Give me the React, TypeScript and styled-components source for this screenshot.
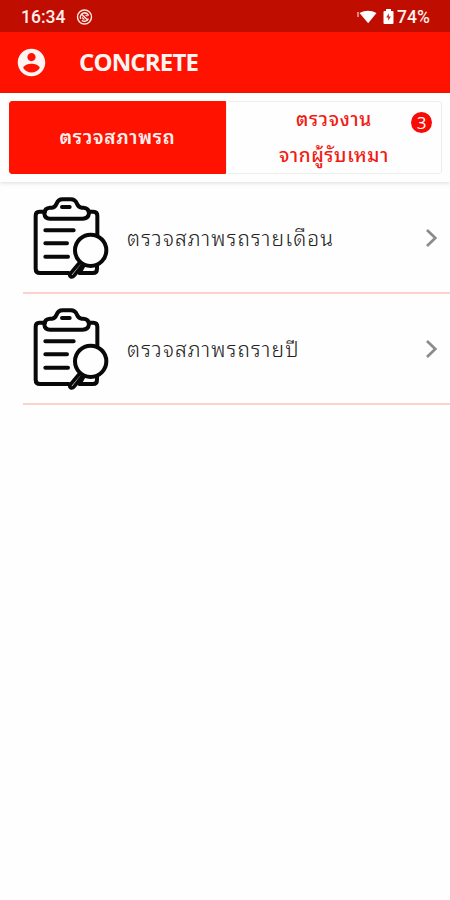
import React from "react";
import styled, { createGlobalStyle } from "styled-components";

const GlobalStyle = createGlobalStyle`
  * { box-sizing: border-box; }
  body { margin: 0; background: #fff; }
`;

const thai = `"Noto Sans Thai Looped", "Liberation Sans", sans-serif`;

const Screen = styled.main`
  width: 450px;
  height: 900px;
  overflow: hidden;
  background: #fefefe;
  font-family: ${thai};
`;

const StatusBar = styled.div`
  height: 32px;
  padding: 2px 20px 0 21px;
  display: flex;
  align-items: center;
  background: #bf0d00;
  color: #fff0ed;
  font: 500 17.5px/30px Roboto, sans-serif;
`;

const Clock = styled.span`
  width: 55px;
`;

const StatusRight = styled.div`
  margin-left: auto;
  display: flex;
  align-items: center;
`;

const Battery = styled.span`
  margin-left: 3px;
  width: 33px;
  white-space: nowrap;
`;

const AppBar = styled.header`
  height: 61px;
  padding: 0 15px;
  display: flex;
  align-items: center;
  gap: 31px;
  background: #ff1200;
  border-bottom: 1px solid #f51507;
  color: #fff4f1;
`;

const Title = styled.h1`
  margin: 0;
  font: 700 24px/32px "Open Sans", sans-serif;
  letter-spacing: -0.85px;
`;

const TabBar = styled.nav`
  height: 89px;
  padding: 8px 8px 8px 9px;
  display: flex;
  background: #fefefe;
  box-shadow: 0 1px 4px rgba(0, 0, 0, 0.14);
`;

const Tab = styled.button<{ $active?: boolean }>`
  flex: 0 0 ${(p) => (p.$active ? 217 : 216)}px;
  height: 73px;
  padding: 0 0 3px;
  position: relative;
  display: flex;
  flex-direction: column;
  align-items: center;
  justify-content: center;
  border: 1px solid ${(p) => (p.$active ? "#ff1200" : "#eeeeee")};
  border-radius: ${(p) => (p.$active ? "3px 0 0 3px" : "0 3px 3px 0")};
  background: ${(p) => (p.$active ? "#ff1200" : "#fefefe")};
  color: ${(p) => (p.$active ? "#fff0ed" : "#f21a12")};
  font: ${(p) => (p.$active ? 600 : 500)} 19px/36px ${thai};
  letter-spacing: ${(p) => (p.$active ? 0.75 : 0.65)}px;
`;

const Badge = styled.span`
  position: absolute;
  top: 10px;
  right: 9px;
  width: 21px;
  height: 21px;
  border-radius: 50%;
  background: #f90b05;
  color: #fff;
  font: 400 17px/21px "Open Sans", sans-serif;
  letter-spacing: 0;
  text-align: center;
`;

const List = styled.ul`
  margin: 0;
  padding: 1px 0 0 23px;
  list-style: none;
`;

const Row = styled.li`
  height: 111px;
  padding: 12px 12px 13px 9px;
  display: flex;
  align-items: center;
  border-bottom: 2px solid #fdd2cc;
`;

const RowLabel = styled.span`
  margin-left: 17px;
  flex: 1;
  white-space: nowrap;
  color: #222;
  font: 300 21px/32px ${thai};
  letter-spacing: 1.15px;
`;

const ChevronSlot = styled.span`
  display: flex;
  padding-top: 2px;
`;

const AlarmIcon = () => (
  <svg width="17" height="17" viewBox="0 0 17 17" fill="none" stroke="#ffe9e5" strokeWidth="1.4">
    <circle cx="8.5" cy="8" r="7" />
    <path d="M4.7 10A4.4 4.4 0 0 1 8.5 3.8a4.2 4.2 0 0 1 4 3M5.8 11.5a4.4 4.4 0 0 0 6.6-2M5.6 5.2l6 5.7" />
    <path d="M6 7.2l3.2 3.2-2.7.2ZM8.5 5.8l2.8 2.3V6Z" fill="#ffe9e5" stroke="none" />
  </svg>
);

const WifiIcon = () => (
  <svg width="26" height="15" viewBox="0 0 26 15" fill="#fff">
    <path d="M2.5 3Q11 -1.5 19.5 3L11.2 13.2Z" />
    <path d="M1 2v5" stroke="#ffd0c8" strokeWidth="1.2" />
  </svg>
);

const BatteryIcon = () => (
  <svg width="11" height="17" viewBox="0 0 11 17">
    <path d="M3 0h5v2h1.5q1 0 1 1v11q0 1-1 1h-8q-1 0-1-1v-11q0-1 1-1H3Z" fill="#fff" />
    <path d="M5.8 4.3 3.2 8.5h2v3.2l2.7-4.3H5.8Z" fill="#bf2a1d" />
  </svg>
);

const AccountIcon = () => (
  <svg width="33" height="33" viewBox="0 0 24 24" fill="#fff4f1">
    <path d="M12 2C6.48 2 2 6.48 2 12s4.48 10 10 10 10-4.48 10-10S17.52 2 12 2zm0 3c1.66 0 3 1.34 3 3s-1.34 3-3 3-3-1.34-3-3 1.34-3 3-3zm0 14.2a7.2 7.2 0 0 1-6-3.22c.03-1.99 4-3.08 6-3.08 1.99 0 5.97 1.09 6 3.08a7.2 7.2 0 0 1-6 3.22z" />
  </svg>
);

const ClipboardIcon = () => (
  <svg width="78" height="85" viewBox="36 30 234 255" fill="none" stroke="#090909" strokeWidth="12" strokeLinecap="round" strokeLinejoin="round">
    <path d="M75 80H58Q47 80 47 92V251Q47 264 60 264H146M206 80H220Q232 80 232 92V150M231 244V251Q231 264 219 264H178L190 243" />
    <path d="M90 101H188Q205 101 207 85Q207 69 190 68H184Q175 66 171 56Q166 43 152 43H128Q114 43 110 56Q105 67 96 68H90Q74 69 73 85Q74 101 90 101ZM126 66H149M76 136H161M76 175H141M76 215H144" />
    <circle cx="212" cy="196" r="47" />
    <path d="M176 236L151 266Q147 272 152 275Q157 278 163 271L187 240" strokeWidth="11" />
  </svg>
);

const ChevronIcon = () => (
  <svg width="13" height="20" viewBox="0 0 13 20" fill="none" stroke="#8b8b8b" strokeWidth="2.7">
    <path d="M2 2L10.3 10L2 18" />
  </svg>
);

const items = ["ตรวจสภาพรถรายเดือน", "ตรวจสภาพรถรายปี"];

export default function App() {
  return (
    <Screen>
      <GlobalStyle />
      <StatusBar>
        <Clock>16:34</Clock>
        <AlarmIcon />
        <StatusRight>
          <WifiIcon />
          <BatteryIcon />
          <Battery>74%</Battery>
        </StatusRight>
      </StatusBar>
      <AppBar>
        <AccountIcon />
        <Title>CONCRETE</Title>
      </AppBar>
      <TabBar>
        <Tab $active>ตรวจสภาพรถ</Tab>
        <Tab>
          <span>ตรวจงาน</span>
          <span>จากผู้รับเหมา</span>
          <Badge>3</Badge>
        </Tab>
      </TabBar>
      <List>
        {items.map((label) => (
          <Row key={label}>
            <ClipboardIcon />
            <RowLabel>{label}</RowLabel>
            <ChevronSlot>
              <ChevronIcon />
            </ChevronSlot>
          </Row>
        ))}
      </List>
    </Screen>
  );
}
